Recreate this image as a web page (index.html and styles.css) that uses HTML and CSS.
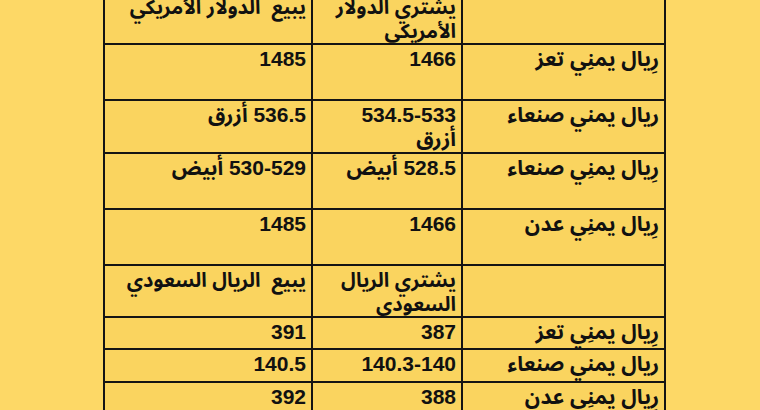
FILE: index.html
```html
<!DOCTYPE html>
<html lang="ar">
<head>
<meta charset="utf-8">
<link rel="stylesheet" href="styles.css">
</head>
<body>
<table class="rates">
  <colgroup>
    <col class="c-label">
    <col class="c-buy">
    <col class="c-sell">
  </colgroup>
  <tr class="h-top">
    <td></td>
    <td class="head">يشتري الدولار<br>الأمريكي</td>
    <td class="head nw">يبيع&nbsp; الدولار الأمريكي</td>
  </tr>
  <tr class="h56">
    <td>رِيال يمنِي تعز</td>
    <td>1466</td>
    <td>1485</td>
  </tr>
  <tr class="h53">
    <td>ريال يمني صنعاء</td>
    <td>534.5-533<br>أزرق</td>
    <td>536.5 أزرق</td>
  </tr>
  <tr class="h56">
    <td>رِيال يمنِي صنعاء</td>
    <td>528.5 أبيض</td>
    <td>530-529 أبيض</td>
  </tr>
  <tr class="h56">
    <td>رِيال يمنِي عدن</td>
    <td>1466</td>
    <td>1485</td>
  </tr>
  <tr class="h52">
    <td></td>
    <td class="head">يشتري الريال<br>السعودي</td>
    <td class="head nw">يبيع&nbsp; الريال السعودي</td>
  </tr>
  <tr class="h32">
    <td>رِيال يمنِي تعز</td>
    <td>387</td>
    <td>391</td>
  </tr>
  <tr class="h33">
    <td>ريال يمني صنعاء</td>
    <td>140.3-140</td>
    <td>140.5</td>
  </tr>
  <tr class="h33">
    <td>رِيال يمنِي عدن</td>
    <td>388</td>
    <td>392</td>
  </tr>
</table>
</body>
</html>
```

FILE: styles.css
```css
html, body {
  margin: 0;
  padding: 0;
  background: #fdd866;
}
body {
  width: 760px;
  height: 410px;
  overflow: hidden;
  font-family: "Liberation Sans", "Noto Sans Arabic", "DejaVu Sans", sans-serif;
}
.rates {
  direction: rtl;
  border-collapse: collapse;
  table-layout: fixed;
  width: 561px;
  margin: -9px 0 0 103px;
  background: #fad45f;
  color: #111;
  font-weight: bold;
  font-size: 21px;
  line-height: 24px;
}
.c-label { width: 203px; }
.c-buy { width: 150px; }
.c-sell { width: 208px; }
.rates td {
  border: 2px solid #141414;
  padding: 2px 5px 0 5px;
  vertical-align: top;
  text-align: right;
  overflow: hidden;
}
.rates td.head {
  font-size: 20px;
}
.nw { white-space: nowrap; }
.h-top { height: 51px; }
.h56 { height: 56px; }
.h53 { height: 53px; }
.h52 { height: 52px; }
.h32 { height: 32px; }
.h33 { height: 33px; }
```
